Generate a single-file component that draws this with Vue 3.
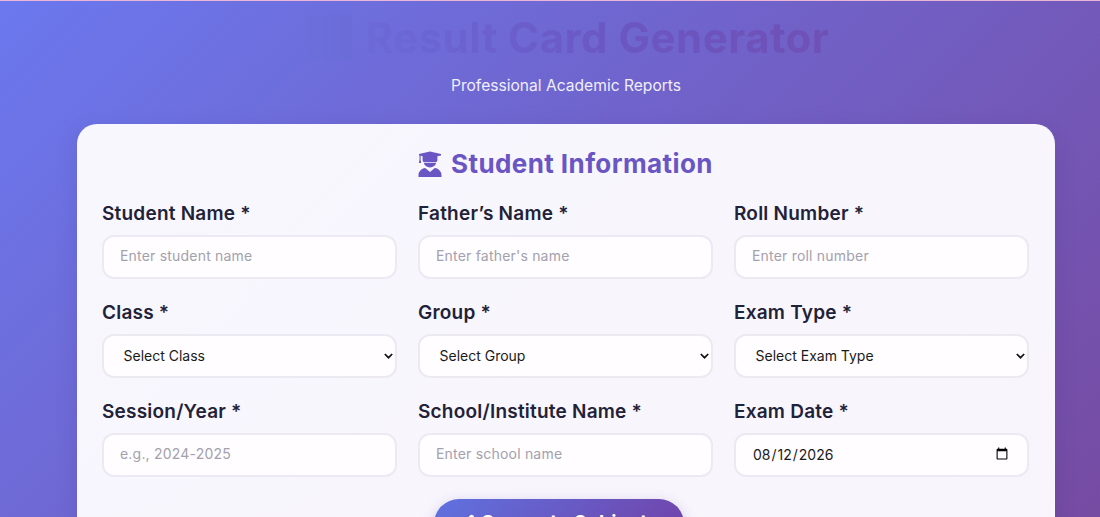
<script setup>
const fields = [
  { label: 'Student Name *', type: 'text', placeholder: 'Enter student name' },
  { label: 'Father’s Name *', type: 'text', placeholder: "Enter father's name" },
  { label: 'Roll Number *', type: 'text', placeholder: 'Enter roll number' },
  { label: 'Class *', type: 'select', placeholder: 'Select Class' },
  { label: 'Group *', type: 'select', placeholder: 'Select Group' },
  { label: 'Exam Type *', type: 'select', placeholder: 'Select Exam Type' },
  { label: 'Session/Year *', type: 'text', placeholder: 'e.g., 2024-2025' },
  { label: 'School/Institute Name *', type: 'text', placeholder: 'Enter school name' },
  { label: 'Exam Date *', type: 'date', value: '2026-08-12' }
]
</script>

<template>
  <div class="page">
    <header class="head">
      <h1 class="title">📊 Result Card Generator</h1>
      <p class="sub">Professional Academic Reports</p>
    </header>
    <main class="card">
      <h2 class="section">
        <svg class="cap" viewBox="0 0 24 26" aria-hidden="true">
          <path d="M1 3 12 .5 23 3v1.400l-3.600.9v3.400c0 1-.3 1.700-.8 2.300H5.400c-.5-.6-.8-1.300-.8-2.300V5.300l-2-.5v4l.6 3.200H.9l.6-3.200V4.400L1 4.300z" />
          <path d="M5.800 11.800h12.400c-.6 2.700-3 4.700-6.200 4.700s-5.600-2-6.200-4.700zM7.200 17 12 21l4.800-4c3.800.5 6.700 3.500 6.700 7.200V26H.5v-1.800C.5 20.500 3.400 17.500 7.200 17z" />
        </svg>
        Student Information
      </h2>
      <div class="grid">
        <div v-for="f in fields" :key="f.label" class="field">
          <label class="label">{{ f.label }}</label>
          <select v-if="f.type === 'select'" class="ctl sel">
            <option>{{ f.placeholder }}</option>
          </select>
          <input v-else class="ctl" :class="{ date: f.type === 'date' }" :type="f.type" :placeholder="f.placeholder" :value="f.value" />
        </div>
      </div>
      <div class="actions">
        <button class="btn" type="button">
          <svg class="pen" viewBox="0 0 16 16" aria-hidden="true">
            <path d="M11 1.500c1-1 2.400-1 3.300 0 .9.900.9 2.300 0 3.200L6 13l-4.500 1.500L3 10z" />
          </svg>
          Generate Subjects
        </button>
      </div>
    </main>
  </div>
</template>

<style>
html, body { margin: 0; height: 517px; overflow: hidden; }
</style>

<style scoped>
.page {
  box-sizing: border-box;
  height: 517px;
  overflow: hidden;
  padding: 1px 45px 0 77px;
  font-family: "Inter", "Open Sans", sans-serif;
  background: linear-gradient(135deg, #6b78ee 0%, #764ba2 100%);
  box-shadow: inset 0 1px 0 #e9b6d8;
}
.head { text-align: center; height: 123px; }
.title {
  margin: 0;
  padding-top: 14px;
  font-size: 42px;
  line-height: 46px;
  font-weight: 700;
  letter-spacing: 0.5px;
  color: transparent;
  background: linear-gradient(90deg, #6c70dc 22%, #6b62d0 40%, #6b57c2 55%, #7050b5 78%);
  -webkit-background-clip: text;
  background-clip: text;
}
.sub {
  margin: 14px 0 0;
  font-size: 15.6px;
  line-height: 22px;
  color: #f0eefc;
}
.card {
  box-sizing: border-box;
  height: 600px;
  padding: 23px 26px 0 25px;
  border-radius: 20px;
  background: linear-gradient(135deg, #f8f7fe, #f8f4fc);
  box-shadow: 0 8px 24px rgba(40, 20, 90, 0.1);
}
.section {
  margin: 0;
  display: flex;
  justify-content: center;
  align-items: center;
  gap: 9px;
  font-size: 26px;
  line-height: 34px;
  letter-spacing: 0.42px;
  font-weight: 700;
  color: #6a55c4;
}
.cap { width: 24px; height: 26px; fill: #6a55c4; }
.grid {
  margin-top: 20px;
  display: grid;
  grid-template-columns: repeat(3, 1fr);
  column-gap: 21px;
  row-gap: 21px;
}
.field { display: flex; flex-direction: column; }
.label {
  font-size: 19px;
  line-height: 26px;
  font-weight: 600;
  letter-spacing: 0.22px;
  color: #1f2238;
  margin-bottom: 8px;
}
.ctl {
  box-sizing: border-box;
  width: 100%;
  height: 44px;
  padding: 0 16px 4px;
  border: 2px solid #ece9f3;
  border-radius: 12px;
  background: #fffdff;
  font: 14px "Inter", "Open Sans", sans-serif;
  letter-spacing: 0.2px;
  color: #1a1a1a;
}
.ctl::placeholder { color: #a3a1ad; }
.date { letter-spacing: 0; padding-bottom: 2px; }
.sel {
  appearance: none;
  -webkit-appearance: none;
  padding-left: 19.5px;
  padding-bottom: 2px;
  letter-spacing: 0;
  background: #fffdff url("data:image/svg+xml,%3Csvg xmlns='http://www.w3.org/2000/svg' width='9' height='6' viewBox='0 0 9 6'%3E%3Cpath d='M.8 1l3.700 3.700L8.200 1' fill='none' stroke='%23111' stroke-width='1.700'/%3E%3C/svg%3E") no-repeat right 2px center;
}
.actions { display: flex; justify-content: center; margin-top: 22px; padding-right: 14px; }
.btn {
  display: flex;
  justify-content: center;
  align-items: center;
  gap: 6px;
  width: 250px;
  height: 50px;
  padding: 0 0 4px;
  border: 0;
  border-radius: 25px;
  color: #fff;
  font: 700 19px "Inter", sans-serif;
  letter-spacing: 0.4px;
  background: linear-gradient(135deg, #5f72e0, #7240a6);
  box-shadow: 0 4px 14px rgba(80, 60, 160, 0.25);
}
.pen { width: 16px; height: 16px; fill: #fff; }
</style>
